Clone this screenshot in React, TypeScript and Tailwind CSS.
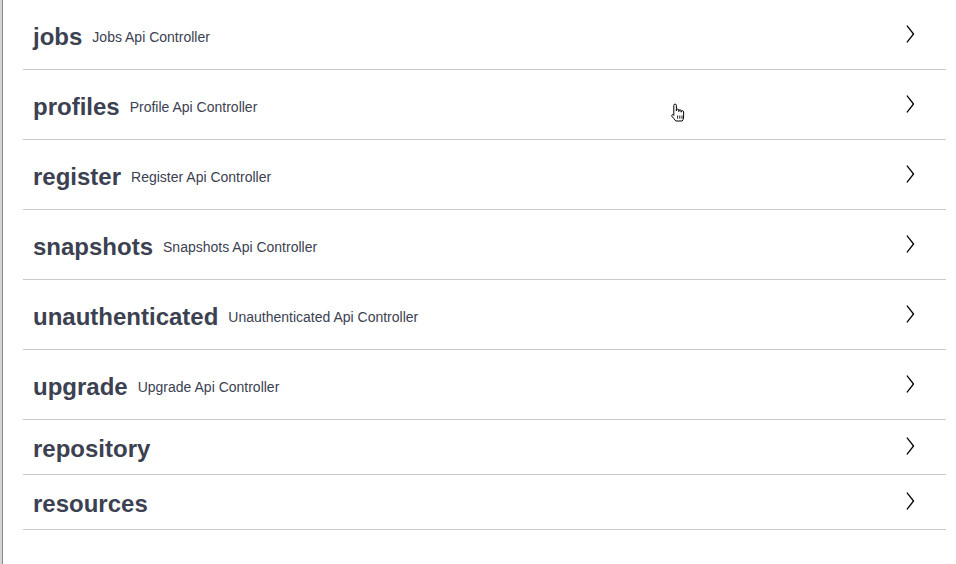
import React from "react";

type Tag = { name: string; description?: string };

const tags: Tag[] = [
  { name: "jobs", description: "Jobs Api Controller" },
  { name: "profiles", description: "Profile Api Controller" },
  { name: "register", description: "Register Api Controller" },
  { name: "snapshots", description: "Snapshots Api Controller" },
  { name: "unauthenticated", description: "Unauthenticated Api Controller" },
  { name: "upgrade", description: "Upgrade Api Controller" },
  { name: "repository" },
  { name: "resources" },
];

function Chevron() {
  return (
    <svg width="20" height="20" viewBox="0 0 20 20" className="shrink-0 mb-[2px]">
      <path
        d="M13.25 10L6.109 2.58a.697.697 0 0 1 0-.979.68.68 0 0 1 .969 0l7.83 7.908a.697.697 0 0 1 0 .979l-7.83 7.908a.68.68 0 0 1-.969 0 .697.697 0 0 1 0-.979L13.25 10z"
        fill="#000"
        transform="translate(10 10) scale(0.82 1) translate(-10 -10)"
      />
    </svg>
  );
}

// Pointer (hand) mouse cursor resting over the list
function HandCursor() {
  return (
    <svg
      width="16"
      height="20"
      viewBox="0 0 16 20"
      className="absolute left-[670px] top-[103px] pointer-events-none"
    >
      <path
        d="M3.8 2.4a1.3 1.3 0 0 1 2.6 0V8V7.4a1.2 1.2 0 0 1 2.4 0V8.6V8a1.2 1.2 0 0 1 2.4 0V9.2V8.9a1.2 1.2 0 0 1 2.4 0V14c0 1.8-.8 3-1.4 4H5.8c-.9-1.5-2.9-3.3-3.9-4.8-.6-.9.3-2 1.3-1.5L3.8 12.4Z"
        fill="#fff"
        stroke="#000"
        strokeWidth="1"
        strokeLinejoin="round"
      />
      <path d="M7.6 12.5v3.2M9.8 12.5v3.2M12 12.5v3.2" stroke="#000" strokeWidth="0.9" />
    </svg>
  );
}

export default function App() {
  return (
    <div
      className="relative flex w-[956px] h-[564px] bg-white overflow-hidden"
      style={{ fontFamily: '"Liberation Sans", Arial, sans-serif' }}
    >
      <div className="w-[3px] shrink-0 bg-[#d4d4d4] border-r border-[#8a8a8a]" />
      <div className="flex-1 pl-[20px] pr-[10px]">
        {tags.map((t) => (
          <div
            key={t.name}
            className={`flex items-center border-b border-[#c9cacd] pl-[10px] pr-[26px] ${
              t.description ? "h-[70px]" : "h-[55px]"
            }`}
          >
            <div className="flex flex-1 items-center pt-[4px]">
              <span className="text-[24px] font-bold text-[#3b4151] leading-none">{t.name}</span>
              {t.description && (
                <span className="ml-[10px] text-[14px] text-[#3b4151] leading-none">
                  {t.description}
                </span>
              )}
            </div>
            <Chevron />
          </div>
        ))}
      </div>
      <HandCursor />
    </div>
  );
}
